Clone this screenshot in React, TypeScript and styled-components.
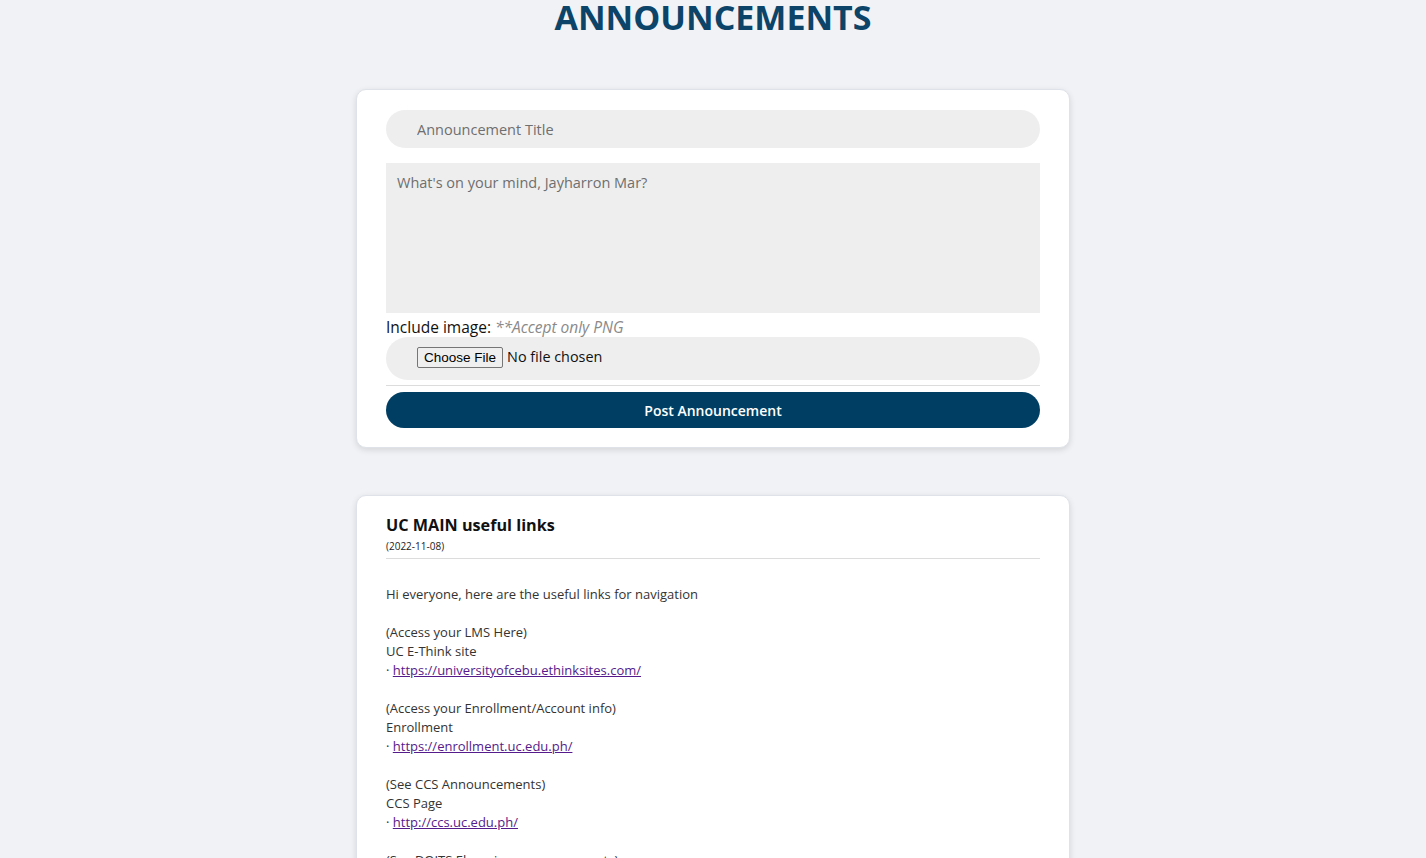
import React from "react";
import styled, { createGlobalStyle } from "styled-components";

const Global = createGlobalStyle`
  html, body { margin: 0; padding: 0; background: #f0f2f5; }
  body { font-family: "Open Sans", "Noto Sans", sans-serif; color: #222; }
  * { box-sizing: border-box; }
`;

const Page = styled.main`
  display: flex;
  flex-direction: column;
  align-items: center;
  padding-bottom: 40px;
`;

const Heading = styled.h1`
  margin: -3px 0 0;
  font-family: "Open Sans", sans-serif;
  font-weight: 700;
  font-size: 34px;
  line-height: 40px;
  color: #0b4468;
`;

const Card = styled.section<{ $top: number }>`
  width: 714px;
  margin-top: ${(p) => p.$top}px;
  background: #fff;
  border: 1px solid #dfe2e8;
  border-radius: 10px;
  box-shadow: 0 2px 6px rgba(0, 0, 0, 0.12);
  padding: 20px 29px 19px;
  display: flex;
  flex-direction: column;
`;

const TitleInput = styled.input`
  height: 38px;
  border: none;
  border-radius: 19px;
  background: #eeeeee;
  padding: 0 31px;
  font-family: inherit;
  font-size: 14.5px;
  color: #333;
  outline: none;
  &::placeholder { color: #6f6f6f; }
`;

const TextArea = styled.textarea`
  margin-top: 15px;
  height: 150px;
  border: none;
  background: #eeeeee;
  padding: 10px 11px;
  resize: none;
  font-family: inherit;
  font-size: 14.5px;
  outline: none;
  &::placeholder { color: #6f6f6f; }
`;

const Label = styled.div`
  margin-top: 5px;
  font-size: 15.5px;
  line-height: 18px;
  color: #111;
`;

const Note = styled.em`
  color: #8a8a8a;
`;

const FileRow = styled.div`
  margin-top: 1px;
  height: 43px;
  border-radius: 22px;
  background: #eeeeee;
  display: flex;
  align-items: center;
  padding: 0 31px 3px;
`;

const FileInput = styled.input`
  font-family: inherit;
  font-size: 14.4px;
  color: #111;
  &::file-selector-button {
    font-family: "Liberation Sans", Arial, sans-serif;
    font-size: 13.5px;
    padding: 2px 6px;
    margin-right: 4px;
    border: 1px solid #767676;
    border-radius: 2px;
    background: #efefef;
    color: #000;
  }
`;

const Divider = styled.hr`
  margin: 5px 0 6px;
  border: none;
  border-top: 1px solid #dcdcdc;
`;

const PostButton = styled.button`
  height: 36px;
  border: none;
  border-radius: 18px;
  background: #003f63;
  color: #fff;
  font-family: inherit;
  font-weight: 600;
  font-size: 14px;
`;

const PostTitle = styled.h2`
  margin: -2px 0 0;
  font-size: 16.2px;
  font-weight: 700;
  line-height: 22px;
  color: #111;
`;

const PostDate = styled.div`
  font-size: 10px;
  line-height: 14px;
  margin-top: 3px;
  color: #222;
`;

const PostBody = styled.div`
  margin-top: 20px;
  font-size: 13px;
  line-height: 19px;
  color: #333;
`;

const Link = styled.a`
  color: #551a8b;
  text-decoration: underline;
`;

const blocks = [
  { note: "(Access your LMS Here)", name: "UC E-Think site", url: "https://universityofcebu.ethinksites.com/" },
  { note: "(Access your Enrollment/Account info)", name: "Enrollment", url: "https://enrollment.uc.edu.ph/" },
  { note: "(See CCS Announcements)", name: "CCS Page", url: "http://ccs.uc.edu.ph/" },
];

export default function App() {
  return (
    <>
      <Global />
      <Page>
        <Heading>ANNOUNCEMENTS</Heading>
        <Card $top={52}>
          <TitleInput placeholder="Announcement Title" />
          <TextArea placeholder="What's on your mind, Jayharron Mar?" />
          <Label>
            Include image: <Note>**Accept only PNG</Note>
          </Label>
          <FileRow>
            <FileInput type="file" accept="image/png" />
          </FileRow>
          <Divider />
          <PostButton>Post Announcement</PostButton>
        </Card>
        <Card $top={47}>
          <PostTitle>UC MAIN useful links</PostTitle>
          <PostDate>(2022-11-08)</PostDate>
          <Divider />
          <PostBody>
            Hi everyone, here are the useful links for navigation
            <br />
            <br />
            {blocks.map((b) => (
              <React.Fragment key={b.url}>
                {b.note}
                <br />
                {b.name}
                <br />
                · <Link href={b.url}>{b.url}</Link>
                <br />
                <br />
              </React.Fragment>
            ))}
            (See DOITS Elearning announcements)
          </PostBody>
        </Card>
      </Page>
    </>
  );
}
